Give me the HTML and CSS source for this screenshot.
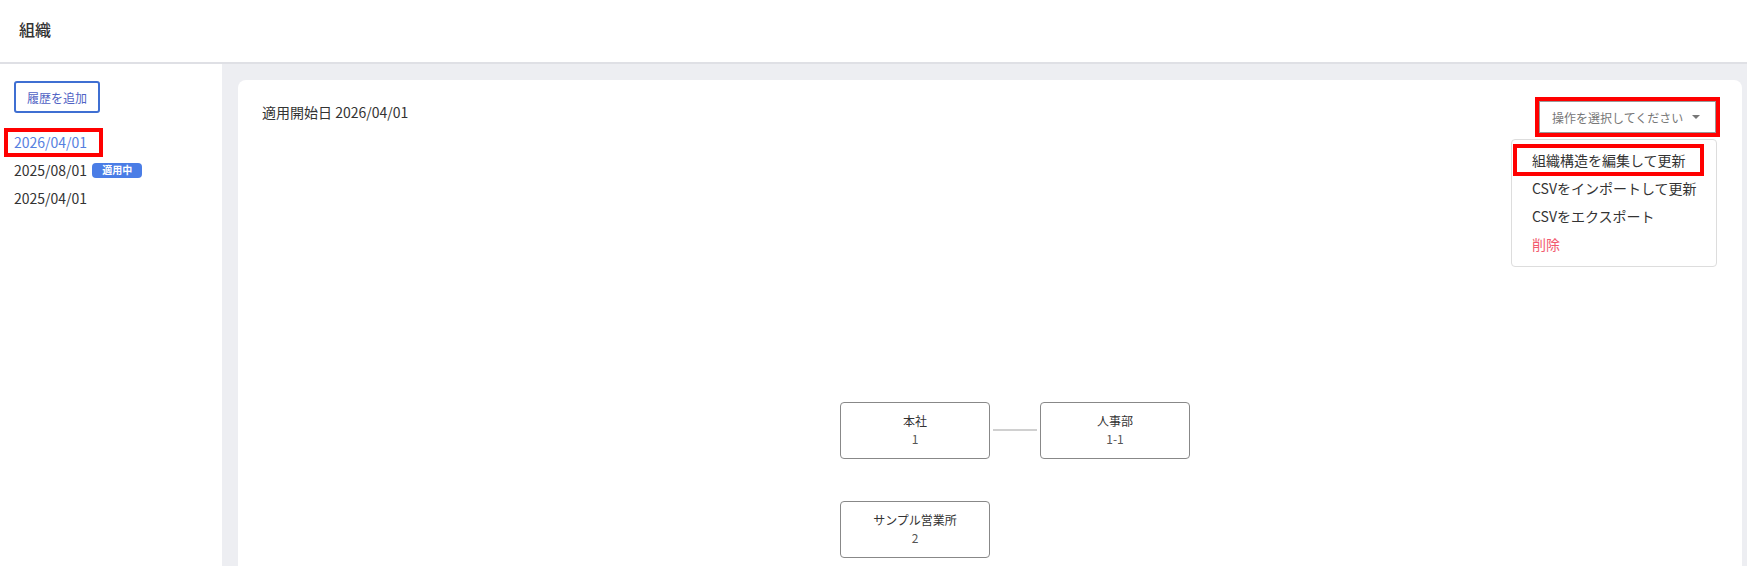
FILE: index.html
```html
<!DOCTYPE html>
<html lang="ja">
<head>
    <meta charset="UTF-8">
    <meta name="viewport" content="width=device-width, initial-scale=1.0">
    <title>組織</title>
    <link rel="stylesheet" href="styles.css">
</head>
<body>
    <header class="page-header">
        <h1>組織</h1>
    </header>

    <div class="layout">
        <aside class="sidebar">
            <button class="add-btn">履歴を追加</button>
            <ul class="history">
                <li class="history-item active"><span class="mark">2026/04/01</span></li>
                <li class="history-item">2025/08/01 <span class="badge">適用中</span></li>
                <li class="history-item">2025/04/01</li>
            </ul>
        </aside>

        <main class="main">
            <section class="card">
                <div class="card-head">
                    <h2>適用開始日 2026/04/01</h2>
                    <div class="select">
                        <span>操作を選択してください</span>
                        <span class="caret"></span>
                    </div>
                </div>

                <ul class="menu">
                    <li class="menu-item"><span class="menu-mark">組織構造を編集して更新</span></li>
                    <li class="menu-item">CSVをインポートして更新</li>
                    <li class="menu-item">CSVをエクスポート</li>
                    <li class="menu-item danger">削除</li>
                </ul>

                <div class="org-canvas">
                    <div class="node" style="left: 602px; top: 322px;">
                        <div class="node-name">本社</div>
                        <div class="node-code">1</div>
                    </div>
                    <div class="edge" style="left: 755px; top: 349px; width: 44px;"></div>
                    <div class="node" style="left: 802px; top: 322px;">
                        <div class="node-name">人事部</div>
                        <div class="node-code">1-1</div>
                    </div>
                    <div class="node" style="left: 602px; top: 421px;">
                        <div class="node-name">サンプル営業所</div>
                        <div class="node-code">2</div>
                    </div>
                </div>
            </section>
        </main>
    </div>
</body>
</html>
```

FILE: styles.css
```css
* {
    margin: 0;
    padding: 0;
    box-sizing: border-box;
}

body {
    font-family: "Noto Sans CJK JP", "Noto Sans", sans-serif;
    color: #333;
    height: 566px;
    overflow: hidden;
    background-color: #fff;
}

.page-header {
    height: 64px;
    display: flex;
    align-items: center;
    padding: 0 0 4px 19px;
    border-bottom: 2px solid #dfe0e5;
}

.page-header h1 {
    font-size: 16px;
    font-weight: 500;
    line-height: 20px;
}

.layout {
    display: flex;
    height: 502px;
}

.sidebar {
    width: 222px;
    flex-shrink: 0;
    padding: 17px 0 0 14px;
    background-color: #fff;
}

.add-btn {
    width: 86px;
    height: 32px;
    border: 2px solid #3f6fd2;
    border-radius: 3px;
    background-color: #fff;
    color: #4f62c4;
    font-family: inherit;
    font-size: 12px;
    cursor: pointer;
}

.history {
    list-style: none;
    margin-top: 16px;
}

.history-item {
    height: 28px;
    display: flex;
    align-items: center;
    font-size: 14px;
    line-height: 20px;
}

.history-item.active {
    height: 27px;
    color: #5680e0;
}

.mark {
    display: inline-block;
    line-height: 21px;
    padding: 0 12px 0 6px;
    margin-left: -6px;
    outline: 4px solid #f00;
}

.badge {
    display: inline-flex;
    align-items: center;
    justify-content: center;
    width: 50px;
    height: 15px;
    margin-left: 5px;
    border-radius: 4px;
    background-color: #4a7de6;
    color: #fff;
    font-size: 10px;
    font-weight: 700;
}

.main {
    flex: 1;
    background-color: #edeef2;
    padding: 16px 5px 0 16px;
}

.card {
    position: relative;
    height: 520px;
    background-color: #fff;
    border-radius: 8px;
}

.card-head {
    display: flex;
    justify-content: space-between;
    align-items: flex-start;
    padding: 21px 26px 0 24px;
}

.card-head h2 {
    font-size: 14px;
    font-weight: 400;
    line-height: 20px;
    margin-top: 1px;
}

.select {
    width: 177px;
    height: 32px;
    display: flex;
    align-items: center;
    justify-content: space-between;
    padding: 0 15px 0 12px;
    border: 1px solid #999;
    outline: 4px solid #f00;
    font-size: 12px;
    color: #777;
}

.caret {
    width: 0;
    height: 0;
    border-left: 4px solid transparent;
    border-right: 4px solid transparent;
    border-top: 4px solid #777;
}

.menu {
    position: absolute;
    top: 59px;
    right: 25px;
    width: 206px;
    list-style: none;
    padding: 6px 0 8px;
    border: 1px solid #ddd;
    border-radius: 4px;
    background-color: #fff;
}

.menu-item {
    height: 28px;
    display: flex;
    align-items: center;
    padding-left: 20px;
    font-size: 14px;
    color: #333;
}

.menu-item.danger {
    color: #f25a6e;
}

.menu-mark {
    display: inline-block;
    line-height: 24px;
    padding: 0 14px 0 15px;
    margin-left: -15px;
    outline: 4px solid #f00;
}

.org-canvas {
    position: absolute;
    inset: 0;
}

.node {
    position: absolute;
    width: 150px;
    height: 57px;
    border: 1px solid #888;
    border-radius: 4px;
    background-color: #fff;
    display: flex;
    flex-direction: column;
    justify-content: center;
    align-items: center;
    padding-bottom: 2px;
    font-size: 12px;
    line-height: 18px;
}

.node-name {
    color: #333;
}

.node-code {
    color: #555;
}

.edge {
    position: absolute;
    height: 2px;
    background-color: #d0d0d0;
}
```
